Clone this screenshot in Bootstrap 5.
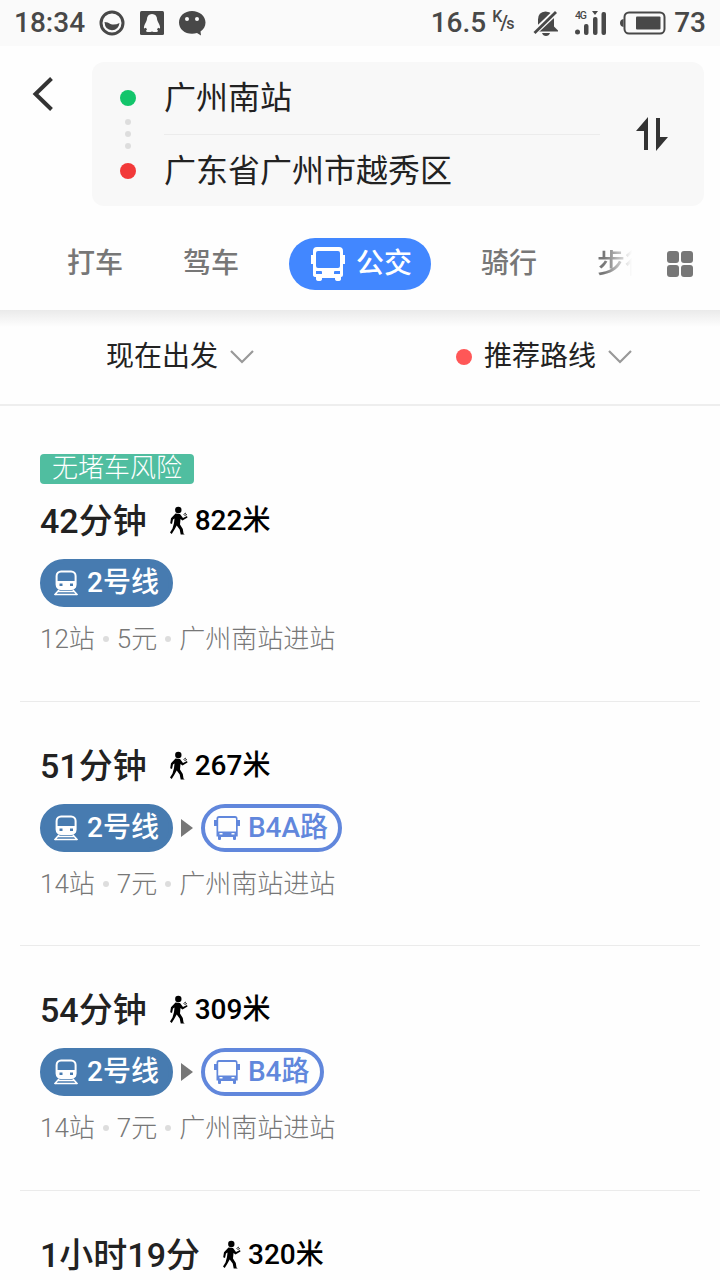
<!DOCTYPE html>
<html lang="zh-CN">
<head>
<meta charset="utf-8">
<meta name="viewport" content="width=device-width, initial-scale=1">
<title>公交路线</title>
<link href="https://cdn.jsdelivr.net/npm/bootstrap@5.3.0/dist/css/bootstrap.min.css" rel="stylesheet">
<style>
body{font-family:Roboto,"Noto Sans CJK SC",sans-serif;color:#222;background:#fefefe;height:1280px;overflow:hidden;line-height:1}
svg{display:block;flex:none}
.statusbar{height:46px;background:#fafafa;color:#484848;font-size:28px;font-weight:500;padding:0 14px}
.rate{font-size:16px;width:27px;height:26px}
.back{width:92px;padding:30px 0 0 32px}
.planner{height:264px;padding-top:16px}
.endpoints{width:612px;height:144px;background:#f8f8f8;border-radius:12px;font-size:32px;color:#222}
.rail{width:72px;padding-top:28px}
.pin{width:16px;height:16px;border-radius:50%}
.tick{width:6px;height:6px;border-radius:50%;background:#ddd}
.place{height:72px;line-height:72px}
.stops{width:436px}
.place + .place{border-top:1px solid #ececec}
.modes{margin-top:32px;height:52px;font-size:28px;font-weight:500;color:#777}
.mode-active{width:142px;height:52px;background:#4287ff;color:#fff;padding-left:22px;margin-left:50px}
.fading{width:35px;overflow:hidden;white-space:nowrap;-webkit-mask-image:linear-gradient(90deg,#000 20%,transparent 100%);mask-image:linear-gradient(90deg,#000 20%,transparent 100%)}
.filters{height:96px;border-bottom:2px solid #eee;background:linear-gradient(#eaeaea,#f0f0f0 5px,#fefefe 17px);font-size:28px}
.hot{width:16px;height:16px;border-radius:50%;background:#ff5757}
.route{margin:0 20px;padding:39px 20px 41.5px;border-bottom:1px solid #ebebeb}
.route:first-child{padding-top:48px}
.tagline{width:154px;height:30px;line-height:28px;margin-bottom:12px;background:#50bea0;border-radius:4px;color:#fff;font-size:26px;font-weight:300}
.headline{height:50px;font-size:34px;font-weight:500}
.walk{font-size:28px;color:#000}
.legs{height:48px;margin:13px 0 12px;font-size:28px;font-weight:500}
.leg{height:48px;border-radius:24px;border:4px solid #477bb0;padding:0 10px 0 9px}
.metro{background:#477bb0;color:#fff}
.bus{border-color:#6187dc;color:#6187dc}
.meta-line{height:40px;font-size:26px;color:#777;font-weight:300}
.sep{width:6px;height:6px;border-radius:50%;background:#ddd;margin:0 8px}
</style>
</head>
<body>
<svg width="0" height="0" class="position-absolute">
<symbol id="train" viewBox="0 0 26 26"><rect x="3.6" y="1.5" width="19" height="17.5" rx="4.5" fill="none" stroke="currentColor" stroke-width="2"/><path fill="currentColor" fill-rule="evenodd" d="M4 11h18.500v7H4zM6.500 13.500v2.500h3v-2.500zM17 13.500v2.500h3v-2.500z"/><path d="M6 20 1.500 25M20 20l4.500 5M5 21.500h16M2.500 24.500h21" stroke="currentColor" stroke-width="1.600" fill="none"/></symbol>
<symbol id="coach" viewBox="0 0 26 26"><path fill="currentColor" fill-rule="evenodd" d="M5 1h16q2.500 0 2.500 2.500V5H26v6h-2.300v10.500H22V24q0 1-1 1h-1q-1 0-1-1v-2H7v2q0 1-1 1H5q-1 0-1-1v-2.500H2.500V11H0V5h2.500V3.500Q2.500 1 5 1zM5 3q-.8 0-.8.8V16.500H22V3.800Q22 3 21 3zM5.500 18v1.500h3V18zM17.500 18v1.500h3V18z"/></symbol>
<symbol id="walker" viewBox="0 0 18 30"><circle cx="8.300" cy="4" r="3.200"/><path d="M5.500 7.500 10 8l3 4 4-2 .5 1.500-5 3-2-1.500-.5 5.500 2.800 4.500.7 4.500 1.200 1h-4l-1-5-3-4-2.500 4.500L1.700 28 0 26.500l2.500-4L4 17l.5-4.500-1.500 1-1 4.500L.2 17.200 1 12.300z"/><path d="M13.500 8.500 16 7M14.500 9.500l2.500-1" stroke="currentColor" fill="none"/></symbol>
<symbol id="chev" viewBox="0 0 24 14"><path d="M1 1l11 11L23 1" fill="none" stroke="#999" stroke-width="2.200"/></symbol>
</svg>

<div class="statusbar d-flex align-items-center">
  <span>18:34</span>
  <svg class="ms-auto me-0" style="margin-left:14px!important" width="26" height="26" viewBox="0 0 26 26"><circle cx="13" cy="13" r="11" fill="none" stroke="#484848" stroke-width="3"/><path fill="#484848" d="M5.500 12q3.500 0 6 2 4 1.500 9-1-1 7-7.500 7.200Q6 20 5.500 12z"/></svg>
  <svg style="margin-left:15px" width="24" height="24" viewBox="0 0 24 24"><rect width="24" height="24" rx="1.500" fill="#484848"/><path fill="#fafafa" d="M12 3q5 0 5.200 6l.8 2q2.500 4 2 6.500l-2-.8-1 2q1.500.8.8 1.800-2.500 1-5.800 0-3.300 1-5.800 0-.7-1 .8-1.800l-1-2-2 .8q-.5-2.500 2-6.500l.8-2Q7 3 12 3z"/></svg>
  <svg style="margin-left:14px" width="28" height="26" viewBox="0 0 28 26"><path fill="#484848" d="M14 1c7.500 0 13.500 5 13.500 11.500 0 4-2 7-5 9l.5 4-4-2.500q-2.500.8-5 .8C6.500 23.800 1 19 1 12.500 1 6 6.500 1 14 1z"/><circle cx="9" cy="9" r="2" fill="#fafafa"/><circle cx="19" cy="9" r="2" fill="#fafafa"/></svg>
  <span class="ms-auto">16.5</span>
  <div class="rate position-relative ms-1"><span class="position-absolute" style="left:2px;top:-1px">K</span><span class="position-absolute" style="left:10px;top:3px;font-size:20px">/</span><span class="position-absolute" style="left:16px;top:6px">s</span></div>
  <svg style="margin-left:16px" width="26" height="26" viewBox="0 0 26 26"><path fill="#484848" d="M12.500 1.500q8.500.5 8.500 8v7l4 4v1H1v-1l4-4v-7q0-7.500 7.500-8zM9 23h8q-1 3-4 3t-4-3z"/><path d="M-1 24.500 25 0" stroke="#fafafa" stroke-width="6"/><path d="M1.500 23 23 2" stroke="#484848" stroke-width="2.800"/></svg>
  <svg style="margin-left:16px" width="32" height="26" viewBox="0 0 32 26"><g fill="#484848"><text x="0" y="9" font-size="10.500" textLength="12" font-weight="500">4G</text><circle cx="2.500" cy="22" r="2.500"/><rect x="9" y="14" width="4.500" height="11" rx="2"/><rect x="18" y="7" width="4.500" height="18" rx="2"/><rect x="26.500" y="2" width="4.500" height="23" rx="2"/><path d="M17 1h6l-3 4z"/></g></svg>
  <svg style="margin-left:13px" width="46" height="24" viewBox="0 0 46 24"><rect x="4.500" y="1.500" width="40" height="21" rx="4.500" fill="none" stroke="#484848" stroke-width="2"/><rect x="16" y="5.500" width="24.500" height="13" rx="1" fill="#484848"/><path d="M3.500 8v8Q0 15.500 0 12t3.500-4z" fill="#484848"/></svg>
  <span style="margin-left:8px">73</span>
</div>

<header class="planner">
  <div class="d-flex">
    <div class="back" style="padding-top:14px"><svg width="22" height="36" viewBox="0 0 22 36"><path d="M19.500 2.500 3.500 18l16 15.500" fill="none" stroke="#333" stroke-width="4"/></svg></div>
    <div class="endpoints d-flex">
      <div class="rail d-flex flex-column align-items-center">
        <span class="pin" style="background:#13c56b"></span>
        <span class="tick" style="margin-top:13px"></span><span class="tick" style="margin-top:6px"></span><span class="tick" style="margin-top:6px"></span>
        <span class="pin" style="background:#f23939;margin-top:14px"></span>
      </div>
      <div class="stops"><div class="place">广州南站</div><div class="place">广东省广州市越秀区</div></div>
      <svg style="margin:55px 0 0 36px" width="32" height="34" viewBox="0 0 32 34"><path fill="#333" d="M12 0v33H8V14H0zM20 1h4v19h8L20 34z"/></svg>
    </div>
  </div>
  <nav class="modes d-flex align-items-center">
    <span style="margin-left:67px">打车</span>
    <span style="margin-left:60px">驾车</span>
    <span class="mode-active rounded-pill d-flex align-items-center"><svg width="34" height="36" viewBox="0 0 34 36"><path fill="#fff" fill-rule="evenodd" d="M6 1h22q4 0 4 4v4h2v9h-2v11q0 2-2 2v2q0 2-3 2t-3-2v-1H11v1q0 2-3 2t-3-2v-2q-3 0-3-2V18H0V9h2V5q0-4 4-4zM7 5Q5 5 5 7v13q0 2 2 2h20q2 0 2-2V7q0-2-2-2zM5 25v3h6v-2q0-1-1-1zM29 25v3h-6v-2q0-1 1-1z"/></svg><span style="margin-left:11px">公交</span></span>
    <span style="margin-left:50px">骑行</span>
    <span class="fading" style="margin-left:60px">步行</span>
    <svg style="margin-left:35px" width="26" height="26" viewBox="0 0 26 26" fill="#777"><rect width="12" height="12" rx="3"/><rect x="14" width="12" height="12" rx="3"/><rect y="14" width="12" height="12" rx="3"/><rect x="14" y="14" width="12" height="12" rx="3"/></svg>
  </nav>
</header>

<section class="filters d-flex">
  <div class="w-50 d-flex align-items-center justify-content-center"><span>现在出发</span><svg style="margin-left:12px" width="24" height="14"><use href="#chev"/></svg></div>
  <div class="w-50 d-flex align-items-center" style="padding-left:96px"><span class="hot"></span><span style="margin-left:12px">推荐路线</span><svg style="margin-left:12px" width="24" height="14"><use href="#chev"/></svg></div>
</section>

<main>
  <article class="route">
    <div class="tagline text-center">无堵车风险</div>
    <div class="headline d-flex align-items-center"><span>42分钟</span><svg style="margin:0 7px 0 23px" width="18" height="30"><use href="#walker"/></svg><span class="walk">822米</span></div>
    <div class="legs d-flex align-items-center"><span class="leg metro d-flex align-items-center"><svg class="me-2" width="26" height="26"><use href="#train"/></svg>2号线</span></div>
    <div class="meta-line d-flex align-items-center"><span>12站</span><i class="sep"></i><span>5元</span><i class="sep"></i><span>广州南站进站</span></div>
  </article>
  <article class="route">
    <div class="headline d-flex align-items-center"><span>51分钟</span><svg style="margin:0 7px 0 23px" width="18" height="30"><use href="#walker"/></svg><span class="walk">267米</span></div>
    <div class="legs d-flex align-items-center"><span class="leg metro d-flex align-items-center"><svg class="me-2" width="26" height="26"><use href="#train"/></svg>2号线</span><svg class="mx-2" width="12" height="18"><path d="M0 0l12 9-12 9z" fill="#777"/></svg><span class="leg bus d-flex align-items-center"><svg class="me-2" width="26" height="26"><use href="#coach"/></svg>B4A路</span></div>
    <div class="meta-line d-flex align-items-center"><span>14站</span><i class="sep"></i><span>7元</span><i class="sep"></i><span>广州南站进站</span></div>
  </article>
  <article class="route">
    <div class="headline d-flex align-items-center"><span>54分钟</span><svg style="margin:0 7px 0 23px" width="18" height="30"><use href="#walker"/></svg><span class="walk">309米</span></div>
    <div class="legs d-flex align-items-center"><span class="leg metro d-flex align-items-center"><svg class="me-2" width="26" height="26"><use href="#train"/></svg>2号线</span><svg class="mx-2" width="12" height="18"><path d="M0 0l12 9-12 9z" fill="#777"/></svg><span class="leg bus d-flex align-items-center"><svg class="me-2" width="26" height="26"><use href="#coach"/></svg>B4路</span></div>
    <div class="meta-line d-flex align-items-center"><span>14站</span><i class="sep"></i><span>7元</span><i class="sep"></i><span>广州南站进站</span></div>
  </article>
  <article class="route border-0">
    <div class="headline d-flex align-items-center"><span>1小时19分</span><svg style="margin:0 7px 0 23px" width="18" height="30"><use href="#walker"/></svg><span class="walk">320米</span></div>
  </article>
</main>
<script src="https://cdn.jsdelivr.net/npm/bootstrap@5.3.0/dist/js/bootstrap.bundle.min.js"></script>
</body>
</html>
